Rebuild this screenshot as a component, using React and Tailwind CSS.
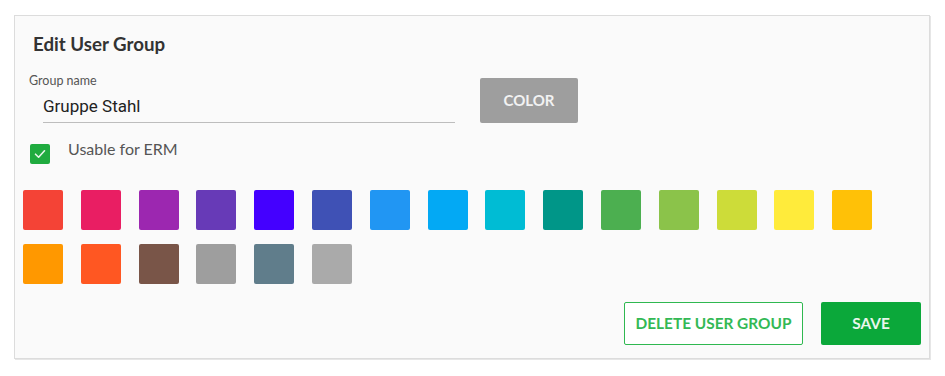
import React, { useState } from 'react';

const swatches = [
  '#f44336', '#e91e63', '#9c27b0', '#673ab7', '#4400ff', '#3f51b5', '#2196f3', '#03a9f4',
  '#00bcd4', '#009688', '#4caf50', '#8bc34a', '#cddc39', '#ffeb3b', '#ffc107',
  '#ff9800', '#ff5722', '#795548', '#9e9e9e', '#607d8b', '#aaaaaa',
];

export default function App() {
  const [name, setName] = useState('Gruppe Stahl');
  const [usable, setUsable] = useState(true);

  return (
    <div className="min-h-screen bg-white pt-[15px] pl-[14px] font-['Lato',sans-serif]">
      <div className="w-[916px] h-[344px] border border-[#dcdcdc] bg-[#fafafa] shadow-[1px_1px_0_#e6e6e6] flex flex-col">
        <h2 className="pl-[18px] pt-[17px] text-[18.7px] leading-[22px] font-bold text-[#333]">
          Edit User Group
        </h2>

        <div className="mt-[19px] pl-[14px] flex items-end">
          <div className="flex flex-col">
            <label className="text-[12.5px] leading-[14px] text-[#555]">Group name</label>
            <input
              value={name}
              onChange={(e) => setName(e.target.value)}
              className="ml-[14px] w-[412px] h-[35px] pt-[1px] border-b border-[#bdbdbd] bg-transparent outline-none text-[17px] text-[#222] font-['Roboto',sans-serif]"
            />
          </div>
          <button className="ml-[25px] w-[98px] h-[45px] rounded-[2px] bg-[#9e9e9e] text-[15px] font-bold text-[#f2f2f2]">
            COLOR
          </button>
        </div>

        <div className="mt-[21px] pl-[15px] flex items-start">
          <button
            onClick={() => setUsable(!usable)}
            className={
              usable
                ? 'w-[20px] h-[20px] rounded-[2px] bg-[#1fab3f] flex items-center justify-center'
                : 'w-[20px] h-[20px] rounded-[2px] border-2 border-[#888] bg-white'
            }
          >
            {usable && (
              <svg width="14" height="14" viewBox="0 0 14 14" fill="none">
                <path d="M2.5 7.2 L5.6 10.2 L11.5 3.8" stroke="#e8f5ea" strokeWidth="1.6" strokeLinecap="round" strokeLinejoin="round" />
              </svg>
            )}
          </button>
          <span className="ml-[18px] -mt-[5px] text-[16px] leading-[20px] text-[#555]">Usable for ERM</span>
        </div>

        <div className="mt-[26px] pl-[8px] pr-[8px] flex flex-wrap gap-x-[17.8px] gap-y-[14px]">
          {swatches.map((c) => (
            <button key={c} className="w-[40px] h-[40px] rounded-[2px]" style={{ backgroundColor: c }} />
          ))}
        </div>

        <div className="mt-[18px] pr-[8px] flex justify-end gap-[18px]">
          <button className="w-[179px] h-[43px] rounded-[2px] border border-[#2fb850] bg-white text-[15.4px] font-bold text-[#33b955]">
            DELETE USER GROUP
          </button>
          <button className="w-[100px] h-[43px] rounded-[2px] bg-[#0ba83a] text-[15.4px] font-bold text-[#e9f6ec]">
            SAVE
          </button>
        </div>
      </div>
    </div>
  );
}
